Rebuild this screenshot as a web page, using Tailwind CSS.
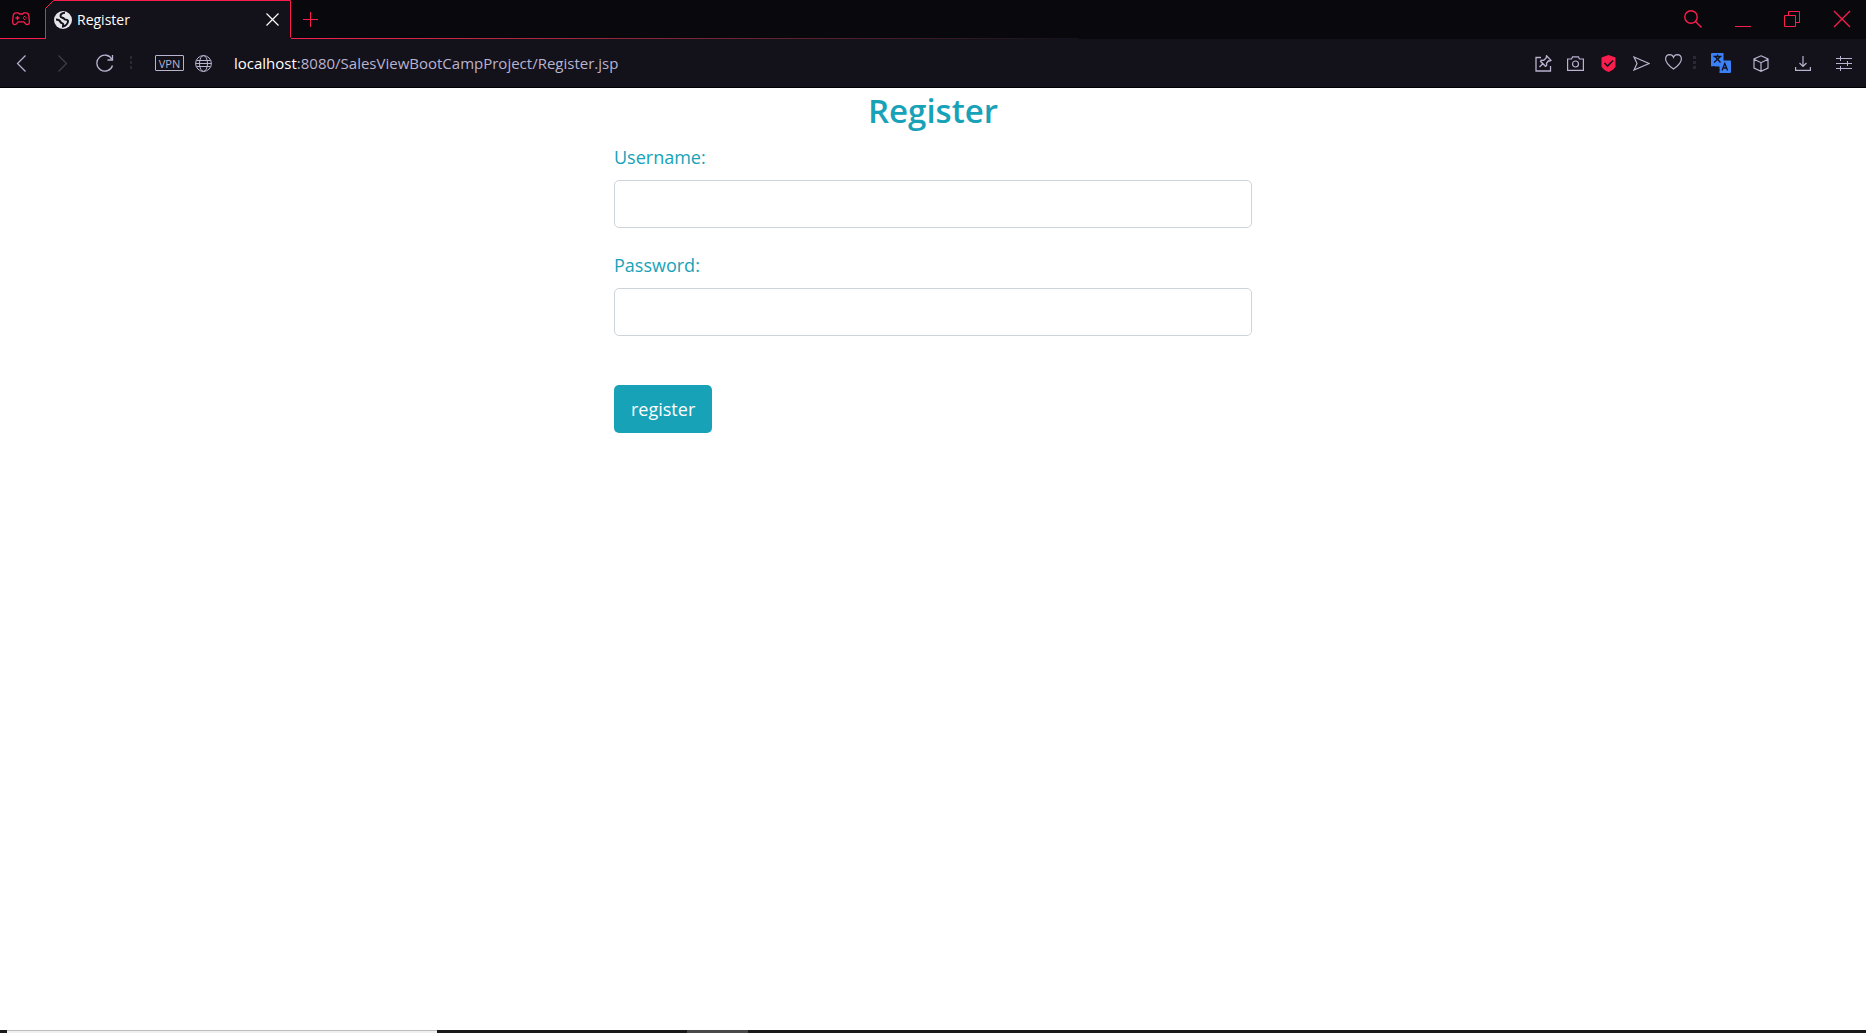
<!DOCTYPE html>
<html lang="en">
<head>
<meta charset="utf-8">
<title>Register</title>
<script src="https://cdn.jsdelivr.net/npm/@tailwindcss/browser@4"></script>
</head>
<body class="flex min-h-screen flex-col bg-white font-['Open_Sans','Noto_Sans',sans-serif]">
<header class="bg-[#13111a] text-[#b9b3cf]">
  <!-- Tab strip -->
  <div class="flex h-[39px] bg-[#09080c] text-[#fa1e4e]">
    <button aria-label="GX Corner" class="flex w-[45px] items-center border-b border-[#fa1e4e] pl-3">
      <svg class="h-[14px] w-[18px]" viewBox="0 0 18 14" fill="none" stroke="currentColor" stroke-width="1.3"><path d="M4 .8h2.200L7.500 2h3L11.800.8H14c1.600 0 2.500 1 2.800 2.700l.5 5.300c.3 2.500-.6 3.900-2.200 3.900-1.300 0-2-1.200-3.300-2.900H6.200c-1.300 1.700-2 2.900-3.300 2.900C1.300 12.700.4 11.300.7 8.800l.5-5.300C1.500 1.800 2.400.8 4 .8Z"/><path d="M5.500 4v4M3.500 6h4M12.500 4v1M12.500 7v1M11 6h1M13.500 6h1"/></svg>
    </button>
    <div class="relative flex w-[246px] items-center">
      <svg class="absolute inset-0 h-full w-full" viewBox="0 0 246 39" fill="#13111a" stroke="currentColor"><path d="M.5 39V8.500L8.500.5H245.500V37l1.500 1.500" /><path d="M1 38.500h244" stroke="#13111a"/></svg>
      <a href="#" class="relative flex flex-1 items-center gap-[5px] pl-[9px] text-sm text-white">
        <svg class="size-[18px]" viewBox="0 0 18 18"><circle cx="9" cy="9" r="9" fill="#e4e4e9"/><path d="M11 1.800C8 2 6.500 3.500 6.500 5.200c0 1.200 1.500 1.300 2.800 1.800.8.400.7 1.300 1.700 1.500 1.500.3 3 .2 3 1.700 0 2.500-2.500 4.800-5 5.300l.2-2.300c-.2-1.200-2.200-1-2.700-2.200C6 9.800 4 8.500 2 8.500" fill="none" stroke="#13111a" stroke-width="2"/></svg>
        <span>Register</span>
      </a>
      <button aria-label="Close tab" class="relative mr-3 text-white"><svg class="size-[13px]" viewBox="0 0 13 13" stroke="currentColor" stroke-width="1.200"><path d="m.5.5 12 12M12.500.5l-12 12"/></svg></button>
    </div>
    <div class="flex flex-1 flex-col">
      <div class="flex flex-1 items-center pl-3">
        <button aria-label="New tab"><svg class="size-[15px]" viewBox="0 0 15 15" stroke="currentColor"><path d="M7.500 0v15M0 7.500h15"/></svg></button>
        <div class="ml-auto flex items-center gap-[33px] pr-[15px]">
          <button aria-label="Search tabs"><svg class="size-[18px]" viewBox="0 0 18 18" fill="none" stroke="currentColor" stroke-width="1.400"><circle cx="7" cy="7" r="6.200"/><path d="m11.500 11.500 6 6"/></svg></button>
          <button aria-label="Minimize"><svg class="h-[18px] w-4" viewBox="0 0 16 18" stroke="currentColor"><path d="M0 16.500h16"/></svg></button>
          <button aria-label="Restore"><svg class="h-[18px] w-4" viewBox="0 0 16 18" fill="none" stroke="currentColor"><path d="M.5 5.500h11v11H.5zM4.500 5.500v-4h11v11h-4"/></svg></button>
          <button aria-label="Close"><svg class="size-[18px]" viewBox="0 0 18 18" stroke="currentColor" stroke-width="1.300"><path d="m1 1 16 16M17 1 1 17"/></svg></button>
        </div>
      </div>
      <div class="h-px w-1/2 bg-gradient-to-r from-[#fa1e4e] to-[#13111a]"></div>
    </div>
  </div>
  <!-- Address bar -->
  <div class="flex h-[49px] items-center border-b border-black pl-4 pr-[14px]">
    <button aria-label="Back"><svg class="h-[17px] w-[11px]" viewBox="0 0 11 17" fill="none" stroke="currentColor" stroke-width="1.200"><path d="M9.500.5 1.500 8.500l8 8"/></svg></button>
    <button aria-label="Forward" class="ml-[30px] text-[#423e4d]"><svg class="h-[17px] w-[11px]" viewBox="0 0 11 17" fill="none" stroke="currentColor" stroke-width="1.200"><path d="m1.500.5 8 8-8 8"/></svg></button>
    <button aria-label="Reload" class="ml-7"><svg class="size-[18px]" viewBox="0 0 18 18" fill="none" stroke="currentColor" stroke-width="1.300"><path d="M16.500 11.500A8 8 0 1 1 16 5.500"/><path d="M16.500 1v5h-5"/></svg></button>
    <svg class="ml-4 h-[14px] w-[3px]" viewBox="0 0 3 14" fill="#2b2936"><path d="M0 0h2v3H0zM0 5h2v3H0zM0 10h2v3H0z"/></svg>
    <button class="ml-[22px] flex h-4 w-[29px] items-center justify-center rounded-[1px] border border-current text-[11px] leading-none">VPN</button>
    <button aria-label="Site information" class="ml-[11px]"><svg class="size-[17px]" viewBox="0 0 17 17" fill="none" stroke="currentColor"><circle cx="8.500" cy="8.500" r="7.900"/><ellipse cx="8.500" cy="8.500" rx="4" ry="7.900"/><path d="M1.500 5.500h14M1.500 11.500h14M.5 8.500h16"/></svg></button>
    <a href="#" class="ml-[22px] text-[15px]"><span class="text-white">localhost</span>:8080/SalesViewBootCampProject/Register.jsp</a>
    <div class="ml-auto flex items-center">
      <button aria-label="Pinboard"><svg class="size-[17px]" viewBox="0 0 17 17" fill="none" stroke="currentColor" stroke-width="1.300"><path d="M6 2.500H1v13.500h14.500V11"/><path d="m4.500 12 3.300-3.300M11.500.8l4.500 4.500-1.200.7-1.300-.2-2 2.500.2 2.200-1.200.8L5.500 6.300l.8-1.200 2.500.2L11.200 3Z"/></svg></button>
      <button aria-label="Snapshot" class="ml-[15px]"><svg class="h-[15px] w-[17px]" viewBox="0 0 17 15" fill="none" stroke="currentColor" stroke-width="1.200"><path d="M.6 3h4L5.500.800h6l.9 2.200h4v11.400H.6Z"/><circle cx="8.500" cy="8" r="3"/></svg></button>
      <button aria-label="Ad blocker" class="ml-[17px]"><svg class="h-[17px] w-[15px]" viewBox="0 0 15 17" fill="none"><path d="M7.500 0 14.500 2.500v9Q12.500 15 7.500 17 2.500 15 .5 11.500v-9Z" fill="#fa1e4e"/><path d="m3.500 8 3 3L12 5.500" stroke="#13111a" stroke-width="1.600"/></svg></button>
      <button aria-label="Send to My Flow" class="ml-[17px]"><svg class="h-[15px] w-[17px]" viewBox="0 0 17 15" fill="none" stroke="currentColor" stroke-width="1.200"><path d="m1 1 15 6.500L1 14l3-6.500Z"/></svg></button>
      <button aria-label="Bookmark" class="ml-[15px] pb-[2px]"><svg class="h-4 w-[17px]" viewBox="0 0 17 16" fill="none" stroke="currentColor" stroke-width="1.200"><path d="M8.500 15Q.600 9.500.600 5 .800.700 4.700.700 7.500.800 8.500 3.300 9.500.800 12.300.700 16.200.700 16.400 5 16.400 9.500 8.500 15Z"/></svg></button>
      <svg class="ml-[11px] h-[14px] w-[3px]" viewBox="0 0 3 14" fill="#2b2936"><path d="M0 0h3v3H0zM0 5h3v3H0zM0 10h3v3H0z"/></svg>
      <button aria-label="Translate" class="ml-[15px]"><svg class="size-5" viewBox="0 0 20 20"><path d="M1 0h11.500v7.500H19q1 0 1 1V19q0 1-1 1H8.500v-6.500H1q-1 0-1-1V1Q0 0 1 0Z" fill="#3c80f6"/><path d="M2.500 3.500h8M6.500 1.500v2M4.500 4l5 5.500M9 4 3 9.500M11 17.500l2.800-7 2.800 7M12 15h3.500" fill="none" stroke="#13111a" stroke-width="1.300"/><path d="M2.500 13q0 3.500 4.500 4M5 14l2.500 3L5 19.500" fill="none" stroke="#13111a" stroke-width="1.800"/></svg></button>
      <button aria-label="Extensions" class="ml-[22px]"><svg class="h-[17px] w-4" viewBox="0 0 16 17" fill="none" stroke="currentColor" stroke-width="1.200"><path d="m8 .8 7 3.200v9l-7 3.300L1 13V4ZM1 4.200l7 3.500 7-3.500M8 7.700v8.300"/></svg></button>
      <button aria-label="Downloads" class="ml-[26px]"><svg class="h-[15px] w-4" viewBox="0 0 16 15" fill="none" stroke="currentColor" stroke-width="1.200"><path d="M8 0v10M4.500 7 8 10.500 11.500 7M.600 11v3.400h14.800V11"/></svg></button>
      <button aria-label="Easy setup" class="ml-[25px]"><svg class="h-[15px] w-4" viewBox="0 0 16 15" stroke="currentColor"><path d="M0 2.500h16M0 7.500h16M0 12.500h16M4.500 0v5M11.500 5v5M4.500 10v5"/></svg></button>
    </div>
  </div>
</header>
<main class="flex-1 px-4 text-[#17a2b8]">
  <form class="mx-auto w-full max-w-[638px]">
    <h1 class="mb-2 text-center text-[33px] leading-[46px] font-semibold">Register</h1>
    <label for="username" class="mb-2 block text-lg leading-[30px]">Username:</label>
    <input id="username" type="text" class="mb-[22px] block h-12 w-full rounded-[5px] border border-[#ced4da] px-4 text-lg text-gray-700">
    <label for="password" class="mb-2 block text-lg leading-[30px]">Password:</label>
    <input id="password" type="password" class="mb-[49px] block h-12 w-full rounded-[5px] border border-[#ced4da] px-4 text-lg text-gray-700">
    <button type="button" class="block h-12 rounded-[5px] bg-[#17a2b8] px-[17px] text-lg text-white">register</button>
  </form>
</main>
<footer class="flex h-[3px] bg-[#1b1a1b]">
  <div class="ml-[7px] w-[430px] border-t border-[#bdbdbd] bg-[#f0f0f0]"></div>
  <div class="ml-[250px] w-[61px] bg-[#4a4949]"></div>
</footer>
</body>
</html>
